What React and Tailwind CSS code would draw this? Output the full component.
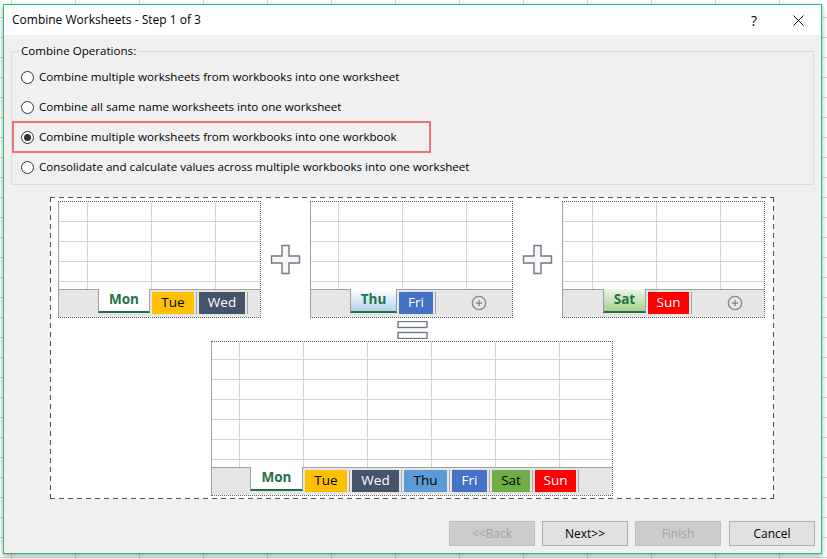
import React from 'react';
import { CirclePlus } from 'lucide-react';

const options = [
  { label: 'Combine multiple worksheets from workbooks into one worksheet' },
  { label: 'Combine all same name worksheets into one worksheet' },
  { label: 'Combine multiple worksheets from workbooks into one workbook', checked: true },
  { label: 'Consolidate and calculate values across multiple workbooks into one worksheet' },
];

const GridArea = ({ heightClass, cols, rows, firstRowClass = 'h-5' }) => (
  <div className={`${heightClass} overflow-hidden`}>
    {Array.from({ length: rows }).map((_, r) => (
      <div key={r} className={`flex border-b border-[#d4d4d4] ${r === 0 ? firstRowClass : 'h-5'}`}>
        {cols.map((c, i) => (
          <div key={i} className={`${c} shrink-0 ${i < cols.length - 1 ? 'border-r border-[#d4d4d4]' : ''}`} />
        ))}
      </div>
    ))}
  </div>
);

const Tab = ({ label, className }) => (
  <div className={`flex h-[22px] shrink-0 items-center justify-center text-[13.5px] leading-none ${className}`}>
    {label}
  </div>
);

const Sep = () => <div className="mx-[2px] h-[22px] w-px shrink-0 bg-[#a6a6a6]" />;

const Sheet = ({ widthClass, gridClass, cols, rows, firstRowClass, blankClass, active, tabs, extra }) => (
  <div className={`${widthClass} shrink-0 border-y border-r border-dotted border-[#5f5f5f] bg-white`}>
    <div className="border-l border-[#9ba1aa]">
      <GridArea heightClass={gridClass} cols={cols} rows={rows} firstRowClass={firstRowClass} />
      <div className="flex h-[28px] bg-[#e6e6e6]">
        <div className={`${blankClass} shrink-0 border-t border-[#a0a0a0]`} />
        <div
          className={`${active.className} flex h-[24px] shrink-0 items-center justify-center border-x border-b-2 border-x-[#a0a0a0] border-b-[#217346] text-[13.5px] font-bold leading-none text-[#217346]`}
        >
          {active.label}
        </div>
        <div className="flex flex-1 items-start border-t border-[#a0a0a0] pl-[2px] pt-[2px]">
          {tabs.map((t, i) => (
            <React.Fragment key={i}>
              <Tab label={t.label} className={t.className} />
              <Sep />
            </React.Fragment>
          ))}
          {extra}
        </div>
      </div>
    </div>
  </div>
);

const BigPlus = () => (
  <svg width="31" height="31" viewBox="0 0 31 31" className="shrink-0">
    <path d="M12 1.5h7v10.5h10.5v7H19v10.5h-7V19H1.5v-7H12z" fill="#f7f7f7" stroke="#6f7886" strokeWidth="1.4" />
  </svg>
);

const Equals = () => (
  <svg width="31" height="18" viewBox="0 0 31 18" className="mx-auto block">
    <rect x="1" y="0.5" width="29" height="6" fill="#fff" stroke="#6f7886" strokeWidth="1.4" />
    <rect x="1" y="11.5" width="29" height="6" fill="#fff" stroke="#6f7886" strokeWidth="1.4" />
  </svg>
);

const AddIcon = ({ className }) => (
  <CirclePlus size={16} strokeWidth={2} className={`${className} mt-[3px] shrink-0 text-[#8a8a8a]`} />
);

const Button = ({ children, disabled, className = '' }) => (
  <button
    className={`h-[25px] w-[86px] border text-[12px] ${className} ${
      disabled ? 'border-[#bfbfbf] bg-[#cccccc] text-[#a3a3a3]' : 'border-[#adadad] bg-[#e1e1e1] text-black'
    }`}
  >
    {children}
  </button>
);

export default function App() {
  return (
    <div className="h-[559px] w-[827px] overflow-hidden bg-white bg-[linear-gradient(to_right,#d4d4d4_1px,transparent_1px),linear-gradient(to_bottom,#d4d4d4_1px,transparent_1px)] bg-[size:64px_20px] bg-[position:11px_17px] pl-[3px] pt-[4px] font-['Open_Sans',sans-serif] text-black">
      <div className="flex h-[550px] w-[819px] flex-col border border-[#22c46c] bg-[#f0f0f0] shadow-[0_2px_5px_rgba(0,0,0,0.35)]">
        {/* Title bar */}
        <div className="flex h-[30px] shrink-0 items-center bg-white pl-[8px] pr-[17px] text-[12px]">
          <span>Combine Worksheets - Step 1 of 3</span>
          <span className="ml-auto text-[14px]">?</span>
          <svg width="11" height="11" viewBox="0 0 11 11" className="ml-[36px]">
            <path d="M0.5 0.5L10.5 10.5M10.5 0.5L0.5 10.5" stroke="#111" strokeWidth="1" />
          </svg>
        </div>

        {/* Body */}
        <div className="flex flex-1 flex-col">
          <fieldset className="mx-[7px] mt-[8px] border border-[#dcdcdc] pb-[2px] pt-[3px]">
            <legend className="ml-[7px] px-[2px] text-[11.6px] leading-[16px]">Combine Operations:</legend>
            {options.map((o, i) =>
              o.checked ? (
                <div key={i} className="-my-px flex h-[32px] w-[419px] items-center border-2 border-[#f07272] pl-[7px] text-[11.6px]">
                  <span className="flex h-[13px] w-[13px] items-center justify-center rounded-full border border-[#333] bg-white">
                    <span className="h-[7px] w-[7px] rounded-full bg-[#333]" />
                  </span>
                  <span className="ml-[5px]">{o.label}</span>
                </div>
              ) : (
                <div key={i} className="flex h-[30px] items-center pl-[9px] text-[11.6px]">
                  <span className="h-[13px] w-[13px] rounded-full border border-[#333] bg-white" />
                  <span className="ml-[5px]">{o.label}</span>
                </div>
              )
            )}
          </fieldset>

          {/* Illustration */}
          <div className="ml-[46px] mt-[12px] h-[302px] w-[724px] bg-white bg-[image:repeating-linear-gradient(90deg,#44546a_0_5px,transparent_5px_9px),repeating-linear-gradient(90deg,#44546a_0_5px,transparent_5px_9px),repeating-linear-gradient(180deg,#44546a_0_5px,transparent_5px_9px),repeating-linear-gradient(180deg,#44546a_0_5px,transparent_5px_9px)] bg-[size:100%_1px,100%_1px,1px_100%,1px_100%] bg-[position:0_0,0_100%,0_0,100%_0] bg-no-repeat p-px pt-[4px]">
            <div className="flex items-center pl-[7px]">
              <Sheet
                widthClass="w-[203px]"
                gridClass="h-[87px]"
                cols={['w-[29px]', 'w-[64px]', 'w-[64px]', 'flex-1']}
                rows={5}
                blankClass="w-[39px]"
                active={{ label: 'Mon', className: 'w-[52px] bg-white' }}
                tabs={[
                  { label: 'Tue', className: 'w-[42px] bg-[#ffc000] text-black' },
                  { label: 'Wed', className: 'w-[46px] bg-[#44546a] text-white' },
                ]}
              />
              <div className="ml-[9px] mr-[9px]">
                <BigPlus />
              </div>
              <Sheet
                widthClass="w-[203px]"
                gridClass="h-[87px]"
                cols={['w-[28px]', 'w-[64px]', 'w-[64px]', 'flex-1']}
                rows={5}
                blankClass="w-[39px]"
                active={{ label: 'Thu', className: 'w-[47px] bg-linear-to-b from-white to-[#b4d1ec]' }}
                tabs={[{ label: 'Fri', className: 'w-[34px] bg-[#4472c4] text-white' }]}
                extra={<AddIcon className="ml-[33px]" />}
              />
              <div className="ml-[9px] mr-[9px]">
                <BigPlus />
              </div>
              <Sheet
                widthClass="w-[203px]"
                gridClass="h-[87px]"
                cols={['w-[30px]', 'w-[64px]', 'w-[64px]', 'flex-1']}
                rows={5}
                blankClass="w-[40px]"
                active={{ label: 'Sat', className: 'w-[43px] bg-linear-to-b from-[#eef6e9] to-[#a9d08e]' }}
                tabs={[{ label: 'Sun', className: 'w-[41px] bg-[#ff0000] text-white' }]}
                extra={<AddIcon className="ml-[33px]" />}
              />
            </div>

            <div className="mt-[3px]">
              <Equals />
            </div>

            <div className="mt-[2px] flex justify-center">
              <Sheet
                widthClass="w-[402px]"
                gridClass="h-[125px]"
                cols={['w-[28px]', 'w-[64px]', 'w-[64px]', 'w-[64px]', 'w-[64px]', 'w-[64px]', 'flex-1']}
                rows={7}
                firstRowClass="h-[18px]"
                blankClass="w-[38px]"
                active={{ label: 'Mon', className: 'w-[53px] bg-white' }}
                tabs={[
                  { label: 'Tue', className: 'w-[42px] bg-[#ffc000] text-black' },
                  { label: 'Wed', className: 'w-[47px] bg-[#44546a] text-white' },
                  { label: 'Thu', className: 'w-[43px] bg-[#5b9bd5] text-black' },
                  { label: 'Fri', className: 'w-[35px] bg-[#4472c4] text-white' },
                  { label: 'Sat', className: 'w-[38px] bg-[#70ad47] text-black' },
                  { label: 'Sun', className: 'w-[41px] bg-[#ff0000] text-white' },
                ]}
              />
            </div>
          </div>

          {/* Buttons */}
          <div className="mt-auto flex items-start justify-end gap-[7px] pb-[7px] pr-[6px]">
            <Button disabled>{'<<Back'}</Button>
            <Button>{'Next>>'}</Button>
            <Button disabled>Finish</Button>
            <Button className="ml-px">Cancel</Button>
          </div>
        </div>
      </div>
    </div>
  );
}
